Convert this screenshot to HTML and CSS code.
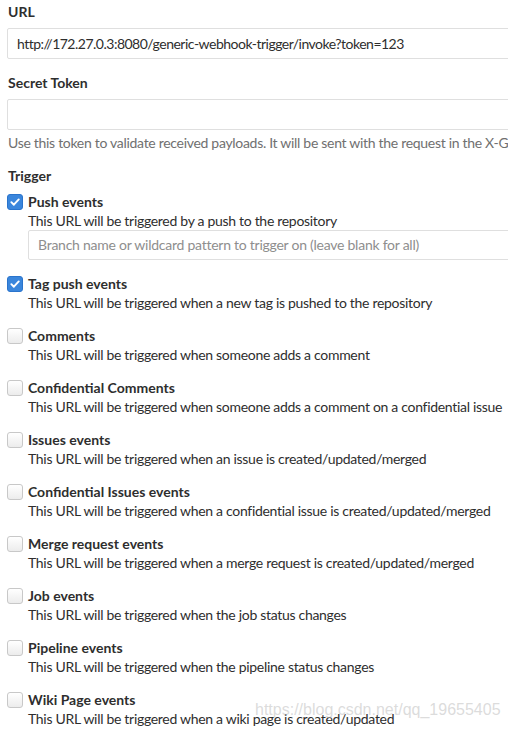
FILE: index.html
```html
<!DOCTYPE html>
<html>
<head>
<meta charset="utf-8">
<link rel="stylesheet" href="styles.css">
</head>
<body>
<div class="page">
  <form class="form">
    <div class="field first">
      <label class="label">URL</label>
      <div class="input url">http://172.27.0.3:8080/generic-webhook-trigger/invoke?token=123</div>
    </div>
    <div class="field">
      <label class="label">Secret Token</label>
      <div class="input"></div>
      <p class="help">Use this token to validate received payloads. It will be sent with the request in the X-Gitlab-Token HTTP header.</p>
    </div>
    <div class="field">
      <label class="label">Trigger</label>
      <ul class="triggers">
        <li class="trigger">
          <span class="cb checked"><svg viewBox="0 0 16 16"><path d="M3.8 8.2l2.9 2.9 5.6-6" fill="none" stroke="#fff" stroke-width="2.2" stroke-linecap="round" stroke-linejoin="round"/></svg></span>
          <div class="tbody">
            <div class="ttitle">Push events</div>
            <div class="tdesc">This URL will be triggered by a push to the repository</div>
            <div class="input sub placeholder">Branch name or wildcard pattern to trigger on (leave blank for all)</div>
          </div>
        </li>
        <li class="trigger">
          <span class="cb checked"><svg viewBox="0 0 16 16"><path d="M3.8 8.2l2.9 2.9 5.6-6" fill="none" stroke="#fff" stroke-width="2.2" stroke-linecap="round" stroke-linejoin="round"/></svg></span>
          <div class="tbody">
            <div class="ttitle">Tag push events</div>
            <div class="tdesc">This URL will be triggered when a new tag is pushed to the repository</div>
          </div>
        </li>
        <li class="trigger">
          <span class="cb"></span>
          <div class="tbody">
            <div class="ttitle">Comments</div>
            <div class="tdesc">This URL will be triggered when someone adds a comment</div>
          </div>
        </li>
        <li class="trigger">
          <span class="cb"></span>
          <div class="tbody">
            <div class="ttitle">Confidential Comments</div>
            <div class="tdesc">This URL will be triggered when someone adds a comment on a confidential issue</div>
          </div>
        </li>
        <li class="trigger">
          <span class="cb"></span>
          <div class="tbody">
            <div class="ttitle">Issues events</div>
            <div class="tdesc">This URL will be triggered when an issue is created/updated/merged</div>
          </div>
        </li>
        <li class="trigger">
          <span class="cb"></span>
          <div class="tbody">
            <div class="ttitle">Confidential Issues events</div>
            <div class="tdesc">This URL will be triggered when a confidential issue is created/updated/merged</div>
          </div>
        </li>
        <li class="trigger">
          <span class="cb"></span>
          <div class="tbody">
            <div class="ttitle">Merge request events</div>
            <div class="tdesc">This URL will be triggered when a merge request is created/updated/merged</div>
          </div>
        </li>
        <li class="trigger">
          <span class="cb"></span>
          <div class="tbody">
            <div class="ttitle">Job events</div>
            <div class="tdesc">This URL will be triggered when the job status changes</div>
          </div>
        </li>
        <li class="trigger">
          <span class="cb"></span>
          <div class="tbody">
            <div class="ttitle">Pipeline events</div>
            <div class="tdesc">This URL will be triggered when the pipeline status changes</div>
          </div>
        </li>
        <li class="trigger">
          <span class="cb"></span>
          <div class="tbody">
            <div class="ttitle">Wiki Page events</div>
            <div class="tdesc">This URL will be triggered when a wiki page is created/updated</div>
          </div>
        </li>
      </ul>
    </div>
  </form>
  <div class="watermark">https://blog.csdn.net/qq_19655405</div>
</div>
</body>
</html>
```

FILE: styles.css
```css
html, body {
  margin: 0;
  padding: 0;
  background: #fff;
  overflow: hidden;
}
body {
  font-family: "Lato", "Open Sans", sans-serif;
  font-size: 14px;
  color: #2e2e2e;
}
.page {
  position: relative;
  width: 508px;
  height: 730px;
  overflow: hidden;
}
.form {
  width: 640px;
  padding: 2px 0 0 7px;
  margin: 0;
}
.field {
  margin-bottom: 13px;
}
.field.first {
  margin-bottom: 14px;
}
.label {
  display: block;
  font-weight: 700;
  line-height: 20px;
  padding-left: 1px;
  margin-bottom: 6px;
}
.input {
  box-sizing: border-box;
  height: 31px;
  border: 1px solid #dfdfdf;
  border-radius: 2px;
  padding: 0 9px;
  line-height: 29px;
  color: #2e2e2e;
  white-space: nowrap;
  overflow: hidden;
}
.input.url {
  letter-spacing: -0.5px;
}
.help {
  margin: 3px 0 0 1px;
  line-height: 20px;
  color: #707070;
  white-space: nowrap;
  letter-spacing: -0.3px;
}
.triggers {
  list-style: none;
  margin: 0;
  padding: 0;
}
.trigger {
  display: flex;
  gap: 5px;
  margin-bottom: 14px;
}
.cb {
  box-sizing: border-box;
  flex: none;
  width: 16px;
  height: 16px;
  margin-top: 2px;
  border: 1px solid #c8c8c8;
  border-radius: 3px;
  background: linear-gradient(#ffffff, #ececec);
}
.cb svg {
  display: block;
  width: 14px;
  height: 14px;
}
.cb.checked {
  border-color: #2a74cc;
  background: #3a86dc;
}
.tbody {
  flex: 1;
}
.ttitle {
  font-weight: 700;
  line-height: 19px;
}
.tdesc {
  line-height: 19px;
  white-space: nowrap;
  letter-spacing: -0.3px;
}
.input.sub {
  height: 30px;
  line-height: 28px;
  letter-spacing: -0.25px;
}
.placeholder {
  color: #8e8e8e;
}
.watermark {
  position: absolute;
  left: 255px;
  top: 701px;
  font-family: "Liberation Sans", Arial, sans-serif;
  font-size: 16px;
  color: rgba(190, 190, 190, 0.55);
  white-space: nowrap;
}
```
